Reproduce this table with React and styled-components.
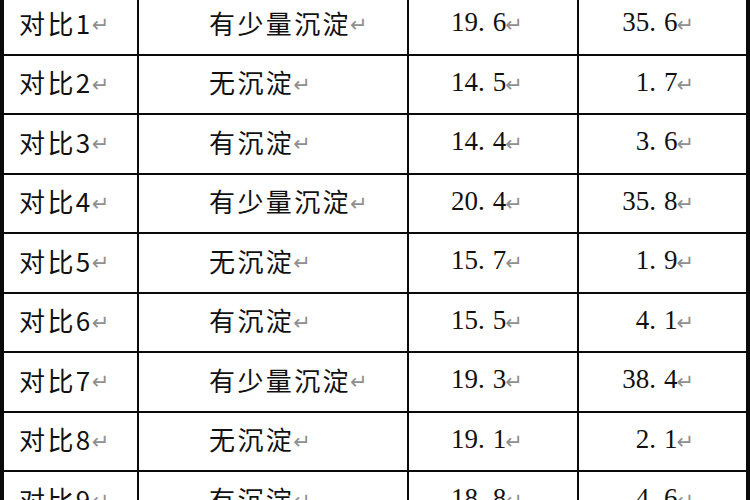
import React from "react";
import styled, {createGlobalStyle} from "styled-components";

const GlobalStyle = createGlobalStyle`
  html, body {
    margin: 0;
    padding: 0;
    background: #ffffff;
    overflow: hidden;
  }
  body {
    font-family: "Noto Sans CJK SC", "DejaVu Sans", sans-serif;
  }
`;

const Page = styled.div`
  width: 750px;
  height: 500px;
  overflow: hidden;
  background: #fff;
`;

const Table = styled.div`
  display: grid;
  grid-template-columns: 133px 268px 168px 167px;
  grid-auto-rows: 57.5px;
  gap: 2px;
  padding: 0 4px;
  margin-top: -3.8px;
  background: #0a0a0a;
  width: 750px;
  box-sizing: border-box;
`;

const Cell = styled.div`
  background: #fff;
  display: flex;
  align-items: center;
  justify-content: ${p => (p.$right ? "flex-end" : "flex-start")};
  padding-left: ${p => p.$pl || 0}px;
  padding-right: ${p => p.$pr || 0}px;
  padding-bottom: 4px;
  box-sizing: border-box;
  color: #111;
  white-space: nowrap;
`;

const Cjk = styled.span`
  font-family: "Noto Sans CJK SC", sans-serif;
  font-size: 26px;
  letter-spacing: 2.4px;
  line-height: 1;
  color: #111;
`;

const Num = styled.span`
  font-family: "Liberation Serif", serif;
  font-size: 27px;
  line-height: 1;
  color: #111;
`;

const Dot = styled.span`
  margin-right: 8px;
`;

const Mark = styled.span`
  font-family: "DejaVu Sans", sans-serif;
  font-size: 21px;
  line-height: 1;
  color: #8f8f8f;
  margin-left: -1px;
  transform: translateY(3px);
`;

const rows = [
  ["对比1", "有少量沉淀", "19.6", "35.6"],
  ["对比2", "无沉淀", "14.5", "1.7"],
  ["对比3", "有沉淀", "14.4", "3.6"],
  ["对比4", "有少量沉淀", "20.4", "35.8"],
  ["对比5", "无沉淀", "15.7", "1.9"],
  ["对比6", "有沉淀", "15.5", "4.1"],
  ["对比7", "有少量沉淀", "19.3", "38.4"],
  ["对比8", "无沉淀", "19.1", "2.1"],
  ["对比9", "有沉淀", "18.8", "4.6"],
];

const Number = ({value}) => {
  const [a, b] = value.split(".");
  return (
    <Num>
      {a}<Dot>.</Dot>{b}
    </Num>
  );
};

const App = () => {
  return (
    <Page>
      <GlobalStyle />
      <Table>
        {rows.map(r => (
          <React.Fragment key={r[0]}>
            <Cell $pl={15}><Cjk>{r[0]}</Cjk><Mark>↵</Mark></Cell>
            <Cell $pl={70}><Cjk>{r[1]}</Cjk><Mark>↵</Mark></Cell>
            <Cell $pl={42}><Number value={r[2]} /><Mark>↵</Mark></Cell>
            <Cell $right $pr={52}><Number value={r[3]} /><Mark>↵</Mark></Cell>
          </React.Fragment>
        ))}
      </Table>
    </Page>
  );
};

export default App;
